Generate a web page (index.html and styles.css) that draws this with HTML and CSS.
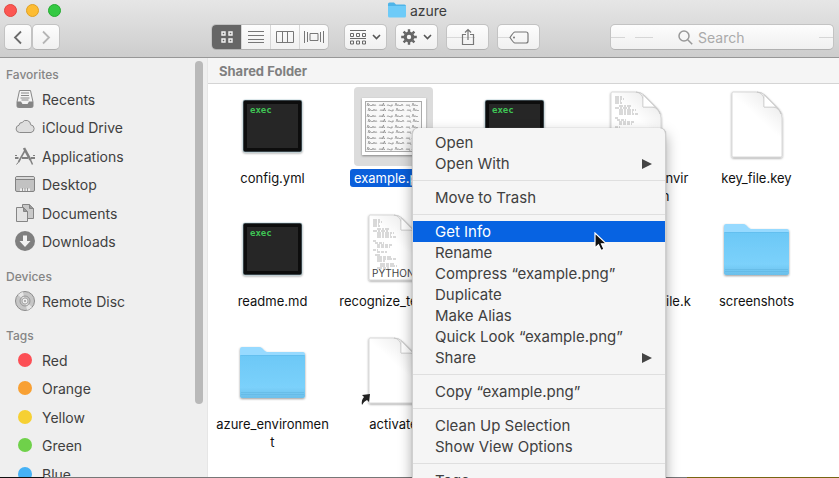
FILE: index.html
```html
<!DOCTYPE html>
<html lang="en">
<head>
<meta charset="utf-8">
<title>azure</title>
<link rel="stylesheet" href="styles.css">
</head>
<body>
<svg class="defs" aria-hidden="true">
  <defs>
    <linearGradient id="folder-front" x1="0" y1="0" x2="0" y2="1">
      <stop offset="0" stop-color="#6cc8f6"/><stop offset="0.75" stop-color="#7bd1fb"/><stop offset="1" stop-color="#6bbfea"/>
    </linearGradient>
    <linearGradient id="paper" x1="0.1" y1="1" x2="0.8" y2="0">
      <stop offset="0.6" stop-color="#fff"/><stop offset="1" stop-color="#e9e9e9"/>
    </linearGradient>
    <filter id="drop" x="-10%" y="-10%" width="120%" height="125%">
      <feDropShadow dx="0" dy="1" stdDeviation="0.8" flood-color="#000" flood-opacity="0.4"/>
    </filter>
    <symbol id="folder" viewBox="0 0 79 79">
      <g filter="url(#drop)">
        <path d="M7 16q0-2 2-2h17q2 0 3 1l3 3q1 1 3 1h35q2 0 2 2v10H7z" fill="#97daff"/>
        <path d="M7 23q0-1 1-1h63q1 0 1 1v40q0 2-2 2H9q-2 0-2-2z" fill="url(#folder-front)"/>
      </g>
      <path d="M7.500 22.500h64" stroke="#5fbbec" stroke-opacity="0.7"/>
      <path d="M8 59.500h63M8 61.500h63" stroke="#5cb1de" stroke-opacity="0.5"/>
    </symbol>
    <symbol id="page" viewBox="0 0 79 79">
      <path d="M15 6q0-1 1-1h23q6 0 10 4l12 12q4 4 4 10v38q0 1-1 1H16q-1 0-1-1z" fill="url(#paper)" stroke="#cfcfcf" stroke-width="0.800" filter="url(#drop)"/>
      <path d="M40 5q6 1 7 7v8h9q7 1 8 7-1-3-4-6L48 8q-4-3-8-3z" fill="#f8f8f8" stroke="#c6c6c6" stroke-width="0.800"/>
      <path d="M47 8v12h12z" fill="#fff" stroke="#ccc" stroke-width="0.700"/>
    </symbol>
    <symbol id="code" viewBox="0 0 79 79">
      <g stroke="#777" stroke-width="0.700" fill="none" stroke-opacity="0.8">
        <path d="M19 10h7M19 12h9M19 14h6M19 16h8M23 19h12M19 21h15M23 23h17M23 25h14M23 27h19" stroke-dasharray="4 1 2 1"/>
        <path d="M19 31h4M21 33h9M23 35h16M23 37h13M19 40h5M23 42h10" stroke-dasharray="3 1"/>
        <path d="M21 45h6M23 47h14M23 49h20M23 51h8M26 54h14M26 56h17M23 58h12" stroke-dasharray="5 1 3 1"/>
      </g>
    </symbol>
    <symbol id="exec" viewBox="0 0 79 79">
      <rect x="10" y="13" width="59" height="52" rx="2" fill="#0b0b0b" stroke="#a9cbd3" stroke-width="0.600" filter="url(#drop)"/>
      <rect x="14" y="17" width="51" height="44" fill="#262626"/>
      <text x="17" y="26" class="exec-text">exec</text>
    </symbol>
    <path id="scrawl" d="M0 0l1-3 .5 3 1-1.500 1 1.500 1-1 .5 1 1-2 1 2 1-1.500 1 1.500M12 0l1-1.500 1 1.500 1-1.500.5 1.500 1-3 .5 3 1-1M20 0l1-1.500 1 1.500 1-1 1 1.500 1-2 .5 1.500M28 0l1-3 1 3 1-1.500 1 1.500 1-1 1 1 1-2 1 2M39 0l1-1.500 1 1.500 1-1.500 1 2.500M45 0l1-3 1 3 1-1.500 1 1.500 1-1 1 1"/>
  </defs>
</svg>

<main class="window">
  <header class="toolbar">
    <div class="titlebar">
      <div class="lights">
        <button class="light close" aria-label="Close"></button>
        <button class="light minimize" aria-label="Minimize"></button>
        <button class="light zoom" aria-label="Zoom"></button>
      </div>
      <h1 class="title">
        <svg width="18" height="16" viewBox="0 0 18 16" aria-hidden="true"><path d="M0 2q0-1.500 1.500-1.500H6L8 2.500h8.500q1.500 0 1.500 1.500v3H0z" fill="#4fb4e8"/><path d="M0 4h18v10q0 1.500-1.500 1.500h-15Q0 15.500 0 14z" fill="#6ecbf8"/></svg>
        azure
      </h1>
    </div>
    <div class="tools">
      <div class="nav">
        <button class="btn" aria-label="Back"><svg width="10" height="15" viewBox="0 0 10 15"><path d="M8 1.500l-6 6 6 6" fill="none" stroke="#6b6b6b" stroke-width="1.800"/></svg></button>
        <button class="btn" aria-label="Forward"><svg width="10" height="15" viewBox="0 0 10 15"><path d="M2 1.500l6 6-6 6" fill="none" stroke="#b5b5b5" stroke-width="1.800"/></svg></button>
      </div>
      <div class="views">
        <button class="seg active" aria-label="Icon view"><svg width="12" height="12" viewBox="0 0 12 12" fill="none" stroke="#f4f4f4" stroke-width="1.400"><path d="M1 1h3v3H1zM8 1h3v3H8zM1 8h3v3H1zM8 8h3v3H8z"/></svg></button>
        <button class="seg" aria-label="List view"><svg width="16" height="12" viewBox="0 0 16 12" stroke="#777"><path d="M0 .5h16M0 4.500h16M0 8.500h16M0 11.500h16"/></svg></button>
        <button class="seg" aria-label="Column view"><svg width="18" height="12" viewBox="0 0 18 12" fill="none" stroke="#777"><path d="M.5 .5h17v11H.5zM6.500 .5v11M11.500 .5v11"/></svg></button>
        <button class="seg" aria-label="Cover view"><svg width="20" height="12" viewBox="0 0 20 12" fill="none" stroke="#777"><path d="M.5 0v12M3.500 1v10M6 2.500h8v7H6zM16.500 1v10M19.500 0v12"/></svg></button>
      </div>
      <div class="actions">
        <button class="btn menu-btn" aria-label="Arrange"><svg width="16" height="15" viewBox="0 0 16 15" fill="none" stroke="#686868"><path d="M0 .5h16M.5 3.500h3v3h-3zM6.500 3.500h3v3h-3zM12.500 3.500h3v3h-3zM0 8.500h16M.5 11h3v3h-3zM6.500 11h3v3h-3zM12.500 11h3v3h-3z"/></svg><svg width="9" height="6" viewBox="0 0 9 6"><path d="M1 1l3.500 3.500L8 1" fill="none" stroke="#555" stroke-width="1.600"/></svg></button>
        <button class="btn menu-btn" aria-label="Action"><svg width="16" height="16" viewBox="-8 -8 16 16"><circle r="3.800" fill="none" stroke="#666" stroke-width="3.200"/><path d="M0-5v-2.800M0 5v2.800M-5 0h-2.800M5 0h2.800M3.600-3.600l1.800-1.800M-3.600-3.600l-1.800-1.800M3.600 3.600l1.800 1.800M-3.600 3.600l-1.800 1.800" stroke="#666" stroke-width="2.400"/></svg><svg width="9" height="6" viewBox="0 0 9 6"><path d="M1 1l3.500 3.500L8 1" fill="none" stroke="#555" stroke-width="1.600"/></svg></button>
        <button class="btn share" aria-label="Share"><svg width="14" height="18" viewBox="0 0 14 18" fill="none" stroke="#777" stroke-width="1.200"><path d="M5 6.500H1.500v10h11v-10H9M7 12V1.500M4 4.500l3-3 3 3"/></svg></button>
        <button class="btn tag" aria-label="Edit Tags"><svg width="20" height="13" viewBox="0 0 20 13" fill="none" stroke="#777" stroke-width="1.200"><path d="M6 1h11q2 0 2 2v7q0 2-2 2H6Q4.500 12 1 6.500 4.500 1 6 1z"/><circle cx="5" cy="6.500" r="1" fill="#777" stroke="none"/></svg></button>
      </div>
      <label class="search">
        <svg width="15" height="15" viewBox="0 0 15 15" fill="none" stroke="#999" stroke-width="1.500" aria-hidden="true"><circle cx="6" cy="6" r="5"/><path d="M9.700 9.700l4.500 4.500"/></svg>
        <input type="search" placeholder="Search" aria-label="Search">
      </label>
    </div>
  </header>

  <div class="body">
    <nav class="sidebar">
      <h2>Favorites</h2>
      <ul>
        <li><a href="#"><svg width="20" height="20" viewBox="0 0 20 20"><path d="M4.500 1.500h11L18 13v4q0 1.500-1.500 1.500h-13Q2 18.500 2 17v-4z" fill="#f3f3f3" stroke="#888"/><path d="M2 12.500h4l1.500 2.500h5l1.500-2.500h4V17q0 1.500-1.500 1.500h-13Q2 18.500 2 17z" fill="#858585"/><path d="M6 4h8M6 6.500h8M5.500 9h9M6.500 11h7" stroke="#888"/></svg>Recents</a></li>
        <li><a href="#"><svg width="20" height="20" viewBox="0 0 20 20"><path d="M4.500 15.500a3.700 3.700 0 0 1-.5-7.300 3 3 0 0 1 3.200-2.700 4.600 4.600 0 0 1 8.500 2.300 3.900 3.900 0 0 1 .3 7.700z" fill="#dedede" stroke="#8b8b8b"/></svg>iCloud Drive</a></li>
        <li><a href="#"><svg width="20" height="20" viewBox="0 0 20 20" fill="none" stroke="#808080"><path d="M10.500 3.500L3.500 16" stroke-width="1.600"/><path d="M4 15.500L1.500 18.500" stroke-width="1"/><path d="M9 2l6.500 12" stroke-width="2.600"/><path d="M15.500 14l2 4.500" stroke-width="1.500"/><path d="M0 12h3.500M7 12h6M16 12h4" stroke-width="2.200"/><path d="M0 9.500h2M18 9.500h2" stroke-width="1"/></svg>Applications</a></li>
        <li><a href="#"><svg width="20" height="20" viewBox="0 0 20 20"><rect x=".5" y="2.500" width="19" height="15" rx="1.500" fill="#c2c2c2" stroke="#838383"/><path d="M1 5.500h18" stroke="#838383"/><path d="M1 4h18" stroke="#eee"/><path d="M5 14.500h10v2.500H5z" fill="#eee"/><path d="M7.500 14v3M10 14v3M12.500 14v3" stroke="#999"/></svg>Desktop</a></li>
        <li><a href="#"><svg width="20" height="20" viewBox="0 0 20 20" stroke="#858585"><path d="M7.500 1.500h7l4 4v10h-11z" fill="#c9c9c9"/><path d="M14.500 1.500v4h4" fill="#999"/><path d="M1.500 4.500h7l4 4v10h-11z" fill="#e3e3e3"/><path d="M8.500 4.500v4h4z" fill="#999"/></svg>Documents</a></li>
        <li><a href="#"><svg width="20" height="20" viewBox="0 0 20 20"><circle cx="10" cy="10" r="10" fill="#7f7f7f"/><path d="M8 4.500h4V10h3.500L10 16 4.500 10H8z" fill="#f2f2f2"/></svg>Downloads</a></li>
      </ul>
      <h2>Devices</h2>
      <ul>
        <li><a href="#"><svg width="20" height="20" viewBox="0 0 20 20" fill="none"><circle cx="10" cy="10" r="9.500" fill="#c6c6c6" stroke="#8c8c8c"/><path d="M10 10L3 4a9 9 0 0 1 5-3zM10 10l7 6a9 9 0 0 1-5 3z" fill="#e6e6e6"/><circle cx="10" cy="10" r="5" stroke="#999"/><circle cx="10" cy="10" r="3" fill="#eee" stroke="#aaa"/><circle cx="10" cy="10" r="1" fill="#999"/></svg>Remote Disc</a></li>
      </ul>
      <h2>Tags</h2>
      <ul>
        <li><a href="#"><span class="dot red"></span>Red</a></li>
        <li><a href="#"><span class="dot orange"></span>Orange</a></li>
        <li><a href="#"><span class="dot yellow"></span>Yellow</a></li>
        <li><a href="#"><span class="dot green"></span>Green</a></li>
        <li><a href="#"><span class="dot blue"></span>Blue</a></li>
      </ul>
      <div class="scrollbar"></div>
    </nav>

    <section class="content">
      <h2 class="group">Shared Folder</h2>
      <ul class="files">
        <li><svg class="icon"><use href="#exec"/></svg><span class="name">config.yml</span></li>
        <li class="selected"><svg class="icon" viewBox="0 0 79 79">
          <rect x="8" y="11" width="64" height="57" fill="#fff" filter="url(#drop)"/>
          <rect x="11.500" y="14.500" width="56" height="50" fill="#f8f8f8" stroke="#aaa"/>
          <g fill="none" stroke="#555" stroke-width="0.600" stroke-opacity="0.7">
            <use href="#scrawl" x="13" y="19"/>
            <use href="#scrawl" x="14" y="24"/>
            <use href="#scrawl" x="13" y="30"/>
            <use href="#scrawl" x="14" y="35"/>
            <use href="#scrawl" x="13" y="41"/>
            <use href="#scrawl" x="14" y="46"/>
            <use href="#scrawl" x="13" y="52"/>
            <use href="#scrawl" x="14" y="57"/>
            <use href="#scrawl" x="13" y="63"/>
          </g>
        </svg><span class="name">example.png</span></li>
        <li><svg class="icon"><use href="#exec"/></svg></li>
        <li><svg class="icon"><use href="#page"/><use href="#code"/></svg><span class="name">run_python_envir<br>nment.json</span></li>
        <li><svg class="icon"><use href="#page"/></svg><span class="name">key_file.key</span></li>
        <li><svg class="icon"><use href="#exec"/></svg><span class="name">readme.md</span></li>
        <li><svg class="icon"><use href="#page"/><use href="#code"/><text x="18" y="67" class="kind">PYTHON</text></svg><span class="name">recognize_text.py</span></li>
        <li></li>
        <li><svg class="icon"><use href="#page"/></svg><span class="name">my_example_file.k</span></li>
        <li><svg class="icon"><use href="#folder"/></svg><span class="name">screenshots</span></li>
        <li><svg class="icon"><use href="#folder"/></svg><span class="name">azure_environmen<br>t</span></li>
        <li><svg class="icon"><use href="#page"/><path d="M8 62l8-1-1 8-2-2q-4 2-5 5-1-5 2-8z" fill="#222"/></svg><span class="name">activate</span></li>
      </ul>
    </section>
  </div>
  <div class="edge"></div>

  <div class="context-menu">
    <button>Open</button>
    <button class="sub">Open With</button>
    <hr>
    <button>Move to Trash</button>
    <hr>
    <button class="current">Get Info</button>
    <button>Rename</button>
    <button>Compress “example.png”</button>
    <button>Duplicate</button>
    <button>Make Alias</button>
    <button>Quick Look “example.png”</button>
    <button class="sub">Share</button>
    <hr>
    <button>Copy “example.png”</button>
    <hr>
    <button>Clean Up Selection</button>
    <button>Show View Options</button>
    <hr>
    <button>Tags…</button>
  </div>
  <svg class="pointer" width="14" height="20" viewBox="0 0 14 20" aria-hidden="true"><path d="M1 1v15l3.500-3.200L7 18.500l3-1.300-2.500-5.400h5z" fill="#111" stroke="#fff" stroke-width="1.200"/></svg>
</main>
</body>
</html>
```
FILE: styles.css
```css
* { box-sizing: border-box; }

body {
  margin: 0;
  font-family: Inter, "Liberation Sans", sans-serif;
  font-size: 14px;
  color: #404040;
}

button {
  margin: 0;
  padding: 0;
  border: 0;
  background: none;
  font: inherit;
  color: inherit;
}

ul { margin: 0; padding: 0; list-style: none; }
h1, h2 { margin: 0; }
svg { flex: none; }
.defs { position: absolute; width: 0; height: 0; }

.window {
  position: relative;
  height: 100vh;
  overflow: hidden;
  display: flex;
  flex-direction: column;
  background: #fff;
}

/* Toolbar */
.toolbar {
  flex: none;
  background: linear-gradient(#e6e6e6, #cdcdcd);
  border-bottom: 1px solid #979797;
}

.titlebar {
  display: grid;
  grid-template-columns: 1fr auto 1fr;
  align-items: center;
  height: 20px;
  padding: 0 8px 0 4px;
}

.lights { display: flex; gap: 9px; }
.light { width: 13px; height: 13px; border-radius: 50%; border: 1px solid; }
.close { background: #fc5753; border-color: #e2463f; }
.minimize { background: #fdbc32; border-color: #dfa023; }
.zoom { background: #34c943; border-color: #24ab30; }

.title {
  display: flex;
  align-items: center;
  gap: 4px;
  font-size: 14px;
  font-weight: 400;
  color: #3c3c3c;
}

.tools {
  display: flex;
  align-items: center;
  padding: 4px 5px 7px 4px;
}

.btn, .views, .search {
  height: 26px;
  border: 1px solid #c3c3c3;
  border-bottom-color: #b0b0b0;
  border-radius: 5px;
  background: linear-gradient(#fdfdfd, #f0f0f0);
}

.btn { display: flex; align-items: center; justify-content: center; }
.nav { display: flex; }
.nav .btn { width: 28px; }

.views { display: flex; margin-left: 151px; overflow: hidden; }
.seg {
  display: flex;
  align-items: center;
  justify-content: center;
  width: 29px;
  border-left: 1px solid #d6d6d6;
}
.seg.active { border-left: 0; background: #666; }

.actions { display: flex; gap: 8px; margin-left: 15px; }
.actions .btn { width: 43px; }
.menu-btn { gap: 6px; }
.share { background: linear-gradient(#d9d9d9, #d9d9d9) 0 50% / 28px 1px no-repeat, linear-gradient(#fdfdfd, #f0f0f0); }
.tag { background: linear-gradient(#d9d9d9, #d9d9d9) 0 50% / 13px 1px no-repeat, linear-gradient(#fdfdfd, #f0f0f0); }

.search {
  display: flex;
  align-items: center;
  gap: 5px;
  flex: 1;
  margin-left: 70px;
  padding-left: 67px;
  background:
    linear-gradient(#d6d6d6, #d6d6d6) 0 50% / 14px 1px no-repeat,
    linear-gradient(#d6d6d6, #d6d6d6) 24px 50% / 18px 1px no-repeat,
    linear-gradient(#d6d6d6, #d6d6d6) 100% 50% / 14px 1px no-repeat,
    linear-gradient(#fdfdfd, #f0f0f0);
}
.search input {
  width: 60px;
  padding: 0;
  border: 0;
  outline: 0;
  background: none;
  font: inherit;
}
.search input::placeholder { color: #aaa; }

/* Sidebar */
.body { display: flex; flex: 1; min-height: 0; }

.sidebar {
  position: relative;
  flex: none;
  width: 208px;
  overflow: hidden;
  padding-top: 6px;
  background: #efefef;
  border-right: 1px solid #e6e6e6;
}
.sidebar h2 {
  height: 21px;
  padding-left: 6px;
  font-size: 12px;
  line-height: 21px;
  font-weight: 500;
  color: #858585;
}
.sidebar ul { margin-bottom: 10px; }
.sidebar li { height: 28px; }
.sidebar li:nth-child(even) { height: 29px; }
.sidebar a {
  display: flex;
  align-items: center;
  gap: 7px;
  height: 28px;
  padding-left: 15px;
  color: inherit;
  text-decoration: none;
}
.dot { width: 14px; height: 14px; margin: 0 3px; border-radius: 50%; }
.red { background: #fc4f55; }
.orange { background: #f8a033; }
.yellow { background: #f6d033; }
.green { background: #6fd14a; }
.blue { background: #45b1f5; }

.scrollbar {
  position: absolute;
  top: 3px;
  right: 4px;
  width: 8px;
  height: 343px;
  border-radius: 4px;
  background: #b9b9b9;
}

/* Files */
.content { flex: 1; min-width: 0; overflow: hidden; }
.group {
  height: 26px;
  padding-left: 11px;
  border-bottom: 1px solid #d4d4d4;
  background: #f5f5f5;
  font-size: 13px;
  line-height: 27px;
  font-weight: 700;
  color: #808080;
}
.files {
  display: grid;
  grid-template-columns: repeat(auto-fill, 121px);
  grid-auto-rows: 123px;
  padding: 3px 0 0 4px;
  color: #111;
}
.files li {
  display: flex;
  flex-direction: column;
  align-items: center;
  gap: 3px;
}
.icon { width: 79px; height: 79px; border-radius: 4px; }
.name {
  padding: 0 4px;
  border-radius: 3px;
  font-size: 13px;
  line-height: 18px;
  text-align: center;
  white-space: nowrap;
}
.selected .icon { background: #dcdcdc; }
.selected .name { background: #0a5fdb; color: #fff; }
.exec-text { font: bold 9px "DejaVu Sans Mono", monospace; fill: #3fc555; }
.kind { font-size: 10px; fill: #444; }

.edge {
  flex: none;
  height: 1px;
  background: linear-gradient(90deg, #111 44px, #777 44px, #777 687px, #776512 687px);
}

/* Context menu */
.context-menu {
  position: absolute;
  top: 128px;
  left: 412px;
  width: 254px;
  padding: 4px 0;
  border: 1px solid #cfcfcf;
  border-width: 0 1px;
  border-radius: 6px;
  background: #f5f5f5;
  box-shadow: 0 0 1px #888, 0 6px 14px rgba(0, 0, 0, 0.35);
  font-size: 15px;
}
.context-menu button {
  display: flex;
  align-items: center;
  justify-content: space-between;
  width: 100%;
  height: 21px;
  padding: 0 13px 0 22px;
}
.context-menu hr {
  height: 13px;
  margin: 0;
  border: 0;
  background: linear-gradient(#dfdfdf, #dfdfdf) 0 50% / 100% 1px no-repeat;
}
.context-menu .current { background: #0763e2; color: #fff; }
.sub::after {
  content: "";
  border: solid transparent;
  border-width: 5px 0 5px 10px;
  border-left-color: #444;
}

.pointer { position: absolute; top: 232px; left: 594px; }
```
